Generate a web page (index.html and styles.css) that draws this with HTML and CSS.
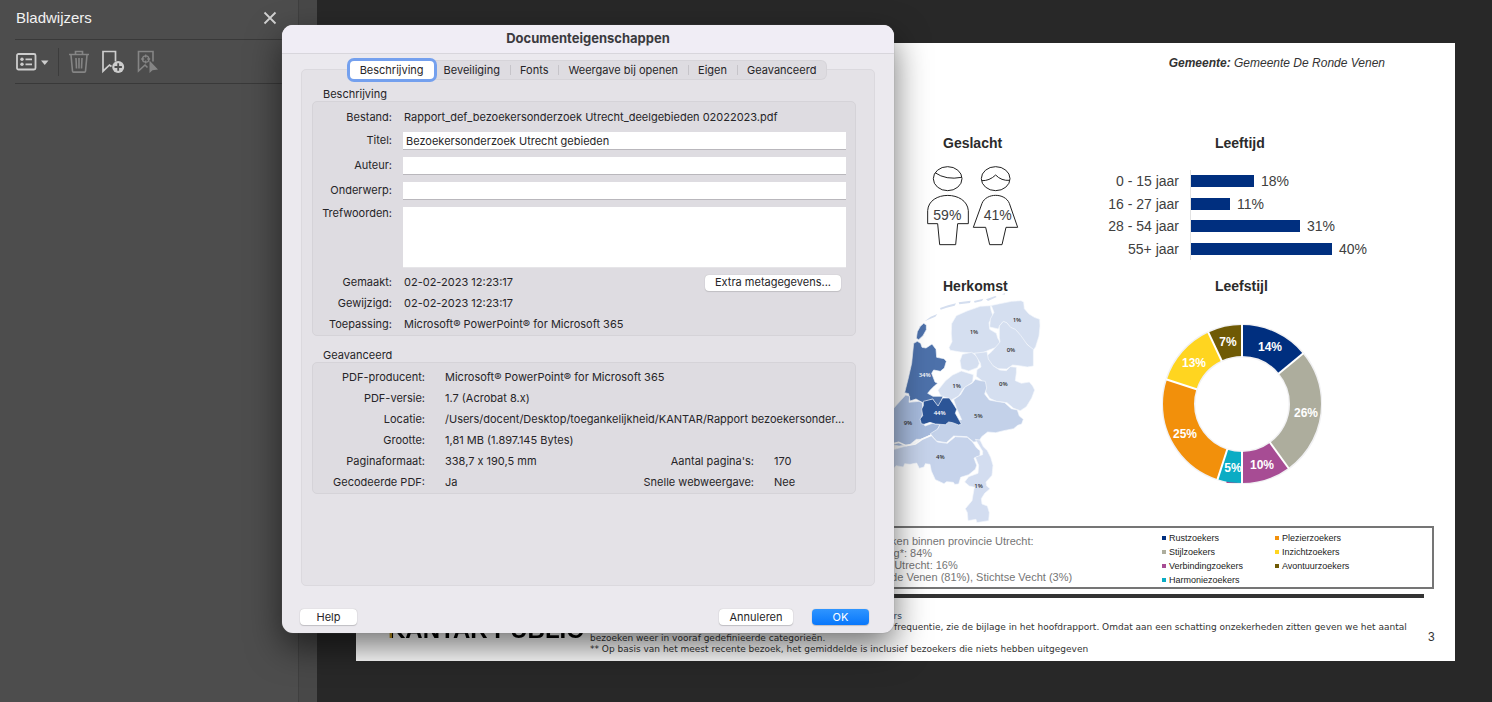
FILE: index.html
```html
<!DOCTYPE html>
<html lang="nl">
<head>
<meta charset="utf-8">
<meta name="viewport" content="width=device-width, initial-scale=1">
<title>Documenteigenschappen</title>
<link rel="stylesheet" href="styles.css">
</head>
<body>
<div class="app">
  <aside class="sidebar">
    <div class="sidebar-panel">
      <header class="sidebar-header">
        <h2 class="sidebar-title">Bladwijzers</h2>
        <button class="icon-button" type="button" aria-label="Sluiten">
          <svg width="14" height="14" viewBox="0 0 14 14"><path d="M1.500 1.500 12.500 12.500M12.500 1.500 1.500 12.500" stroke="#d2d2d2" stroke-width="1.800" fill="none"/></svg>
        </button>
      </header>
      <div class="toolbar">
        <button class="icon-button menu-button" type="button" aria-label="Opties">
          <svg width="34" height="18" viewBox="0 0 34 18"><rect x="1" y="1" width="18.500" height="15.500" rx="1.500" fill="none" stroke="#cdcdcd" stroke-width="1.800"/><circle cx="6" cy="6.300" r="1.700" fill="#cdcdcd"/><circle cx="6" cy="11.300" r="1.700" fill="#cdcdcd"/><path d="M9.500 6.300h6.500M9.500 11.300h6.500" stroke="#cdcdcd" stroke-width="1.800"/><path d="M25 7.500h7.500l-3.750 4.500z" fill="#cdcdcd"/></svg>
        </button>
        <span class="toolbar-divider"></span>
        <button class="icon-button" type="button" aria-label="Verwijderen">
          <svg width="22" height="24" viewBox="0 0 22 24"><path d="M1 4.500h20M7.500 4V1.500h7V4M3 5l1.500 16.200q.1.900 1 .900h11q.900 0 1-.900L19 5M8 8l.5 10.500M11 8v10.500M14 8l-.5 10.500" fill="none" stroke="#858585" stroke-width="1.600"/></svg>
        </button>
        <button class="icon-button" type="button" aria-label="Nieuwe bladwijzer">
          <svg width="24" height="24" viewBox="0 0 24 24"><path d="M10.500 16.500 8.500 15 2 21.200V1.500h12.500v10" fill="none" stroke="#cdcdcd" stroke-width="1.700"/><circle cx="17.200" cy="17" r="6" fill="#cdcdcd"/><path d="M17.200 13.300v7.400M13.500 17h7.400" stroke="#4d4d4d" stroke-width="1.800"/></svg>
        </button>
        <button class="icon-button goto-button" type="button" aria-label="Naar bladwijzer">
          <svg width="24" height="24" viewBox="0 0 24 24"><path d="M11.500 17.500 9 15l-6.500 6V1.500H17v10" fill="none" stroke="#858585" stroke-width="1.600"/><circle cx="9.700" cy="9" r="3.200" fill="none" stroke="#858585" stroke-width="1.300"/><path d="M9.700 4.500v3M9.700 10.500v3M5.200 9h3M11.200 9h3" stroke="#858585" stroke-width="1.300"/><path d="M13.500 10.500v12.500l3-2.800 5.500-.7z" fill="#858585"/></svg>
        </button>
      </div>
    </div>
    <div class="sidebar-edge"></div>
  </aside>

  <main class="viewer">
    <article class="slide">
      <p class="slide-place"><b>Gemeente:</b> Gemeente De Ronde Venen</p>

      <div class="charts">
        <section class="chart chart-people">
          <h2 class="chart-title">Geslacht</h2>
          <svg class="people" width="200" height="88" viewBox="0 120 600 264">
            <g fill="none" stroke="#222" stroke-width="3">
              <ellipse cx="203" cy="176" rx="43" ry="36"/><path d="M165 158Q198 181 245 172"/>
              <ellipse cx="347" cy="176" rx="43" ry="36"/><path d="M305 182Q328 183 347 165 364 183 389 181"/>
              <path d="M143 311V272C146 211 260 211 265 272V311H233L227 374H179L173 311Z"/>
              <path d="M280 322 306 250C319 218 375 218 388 250L413 322H378L366 374H329L317 322Z"/>
            </g>
            <text class="people-value" x="202" y="300">59%</text>
            <text class="people-value" x="353" y="300">41%</text>
          </svg>
        </section>

        <section class="chart chart-age">
          <h2 class="chart-title">Leeftijd</h2>
          <dl class="bars">
            <div class="bar-row"><dt>0 - 15 jaar</dt><dd><span class="bar" style="width:63px"></span>18%</dd></div>
            <div class="bar-row"><dt>16 - 27 jaar</dt><dd><span class="bar" style="width:39px"></span>11%</dd></div>
            <div class="bar-row"><dt>28 - 54 jaar</dt><dd><span class="bar" style="width:109px"></span>31%</dd></div>
            <div class="bar-row"><dt>55+ jaar</dt><dd><span class="bar" style="width:141px"></span>40%</dd></div>
          </dl>
        </section>

        <section class="chart chart-origin">
          <h2 class="chart-title">Herkomst</h2>
          <svg class="map" width="200" height="234" viewBox="0 0 600 702">
            <g stroke="#f4f7fc" stroke-width="2" stroke-linejoin="round">
              <path fill="#d4deef" stroke="none" d="M134 94l18-14 20-8-6 8-18 8zM180 54l24-8 24-6-4 7-24 6-18 6zM236 37l36-5-2 7-32 4zM282 33l28-7-4 7-22 5zM318 28l28-10 4 3-26 12zM366 13l10-4-2 5z"/>
              <path fill="#4d71aa" d="M131 100l8 5v14l-10 18-13 12-7-4 3-20 9-16z"/>
              <path fill="#d5dff0" d="M331 47l-30 2-40 14-32 14-14 24-1 30 2 24-9 18 4 8 30 5 42 4 24-1 20-9 22-8 12-14-8-14-4-14-20-12-2-20 12-20-6-18z"/>
              <path fill="#d5dff0" d="M331 47l24-5 40-8 28-2 8 4 2 20 14 16 16 10 16 6 1 20-3 30-10 32-8 12-14-16-14-12-18-28-10-8-12-5-10-14-12-4-10 12-4 10-26-6 2-24 11-20-8-20z"/>
              <path fill="#d5dff0" d="M358 108l12-14 10 4 12 14 14 6 16 18 20 28 18 14v50l-18 3-24-4-20-2-18 12-26-1-22-12-8-14-4-12 16-14 24-28-2-14z"/>
              <path fill="#d5dff0" d="M247 193l28-6 18 14 5 20-6 12-26 10-22-7-4-24z"/>
              <path fill="#d5dff0" d="M283 190l38-5 4 22 14 20 20 13 20 2 12-12 18 2v16l-3 24 18 8 24-4 10 12 6 12-9 24-16 26-18 12-20-7-20-17-32-4-20-9-12-20-2-16-8-16-18-14 2-20 12-8-2-12z"/>
              <path fill="#d5dff0" d="M174 301l22-28 22-18 26-12 36 11-2 22-28 20-14 22-22 12-32-13z"/>
              <path fill="#4d71aa" d="M112 154l10 6 4 12 12 2 18-12 12 16 2 24 22 4 7 8-6 20-12 10-20-4-6 10 10 26 8 4-10 8-12 12-8 10 16 9 30 0-8 22-9 10-14-24-30 11-20-11-18 6-4-22-12-3 11-44 10-44 6-60z"/>
              <path fill="#a7bbdd" d="M77 315l12 4-2 18 30-3 10 4 2 28-6 22 12 20 22-8 24 4-10 18-22 14-20 12-20 0-20 16-32 4-30-6V372l20-24z"/>
              <path fill="#c3d1e9" d="M286 268l16 4 14 2 4 20-6 18 14 18 20 4 26 4 20 18 18 4 6 18 12 10-5 14-12 4-12 10-30 6-24 6-24-2-18 14-8 14-16 2-20-16-40-2-22 20-30-5-18-22 22-14 16-32 30 6 26-2-16-36-8-24 20-14 14-24 22-12z"/>
              <path fill="#2c5597" d="M130 334l28-7 16 21 14-24 20 0 12 18 10 16-4 12 18 32-8 3-18-7-12-2-10 8-30-2-16-5-18 6-8-2-4-14 8-10-3-20 5-10z"/>
              <path fill="#c6d3eb" d="M26 482l18-4 40-12 18-4 20-14 30-13 20 21 30 4 24-20 36 2 16 14 12 18 10 8v16l-18 6 8 22-4 12-20 16-24 8-6 20-12 1-4-6-20-2-8 6-26-12-12-26-4-20-14-2-4 10-14 4-8-16-20 4-16-2-4 10-22-4-12 14-8-4z"/>
              <path fill="#d3ddf0" d="M286 448l14 2 10 20 12 12 10 20 7 24-3 30-18 20 2 12 10 8-16 14-10 16 2 16 16 6 6 20-2 24-30 5-6 0-2-9-24 4-2-24-6-12 20-24 6-34 2-6-16-4-14-12 12-16 28-10 2-24-10-24 10-4 12-4v-10z"/>
            </g>
            <path fill="none" stroke="#fff" stroke-width="5" d="M30 463l26-6 22 10 28-5 20-14 28-12"/>
            <g class="map-values">
              <text x="282" y="131">1%</text><text x="411" y="97">1%</text><text x="393" y="185">0%</text><text x="370" y="289">0%</text><text x="230" y="293">1%</text><text x="295" y="384">5%</text><text x="84" y="406">9%</text><text x="181" y="508">4%</text><text x="296" y="595">1%</text>
              <text class="map-value-light" x="134" y="262">34%</text><text class="map-value-light" x="179" y="375">44%</text>
            </g>
          </svg>
        </section>

        <section class="chart chart-style">
          <h2 class="chart-title">Leefstijl</h2>
          <svg class="donut" width="160" height="160" viewBox="0 0 160 160">
            <circle cx="80" cy="80" r="63.500" fill="none" stroke="#f1f1f3" stroke-width="34"/>
            <g transform="rotate(-90 80 80)" fill="none" stroke-width="31">
              <circle cx="80" cy="80" r="63.500" pathLength="100" stroke="#002f7f" stroke-dasharray="14 86"/>
              <circle cx="80" cy="80" r="63.500" pathLength="100" stroke="#adad9d" stroke-dasharray="26 74" stroke-dashoffset="-14"/>
              <circle cx="80" cy="80" r="63.500" pathLength="100" stroke="#a74c94" stroke-dasharray="10 90" stroke-dashoffset="-40"/>
              <circle cx="80" cy="80" r="63.500" pathLength="100" stroke="#0aacc4" stroke-dasharray="5 95" stroke-dashoffset="-50"/>
              <circle cx="80" cy="80" r="63.500" pathLength="100" stroke="#f2900b" stroke-dasharray="25 75" stroke-dashoffset="-55"/>
              <circle cx="80" cy="80" r="63.500" pathLength="100" stroke="#ffd520" stroke-dasharray="13 87" stroke-dashoffset="-80"/>
              <circle cx="80" cy="80" r="63.500" pathLength="100" stroke="#6f5a05" stroke-dasharray="7 93" stroke-dashoffset="-93"/>
            </g>
            <g stroke="#fff" stroke-width="2">
              <path d="M80 0v33"/><path d="M80 0v33" transform="rotate(50.400 80 80)"/><path d="M80 0v33" transform="rotate(144 80 80)"/><path d="M80 0v33" transform="rotate(180 80 80)"/><path d="M80 0v33" transform="rotate(198 80 80)"/><path d="M80 0v33" transform="rotate(288 80 80)"/><path d="M80 0v33" transform="rotate(334.800 80 80)"/>
            </g>
            <g class="donut-values">
              <text x="108" y="27">14%</text><text x="144" y="93">26%</text><text x="100" y="145">10%</text><text x="71" y="148">5%</text><text x="23" y="114">25%</text><text x="32" y="43">13%</text><text x="66" y="22">7%</text>
            </g>
          </svg>
        </section>
      </div>

      <div class="summary">
        <p class="summary-text">eken binnen provincie Utrecht:<br>ing*: 84%<br>e Utrecht: 16%<br>nde Venen (81%), Stichtse Vecht (3%)</p>
        <ul class="legend">
          <li class="key key-navy">Rustzoekers</li>
          <li class="key key-grey">Stijlzoekers</li>
          <li class="key key-purple">Verbindingzoekers</li>
          <li class="key key-cyan">Harmoniezoekers</li>
        </ul>
        <ul class="legend">
          <li class="key key-orange">Plezierzoekers</li>
          <li class="key key-yellow">Inzichtzoekers</li>
          <li class="key key-olive">Avontuurzoekers</li>
        </ul>
      </div>
      <hr class="slide-rule">

      <footer class="slide-footer">
        <div class="brand">KANTAR PUBLIC</div>
        <div class="notes">
          <p class="note-tail note-source">ers</p>
          <p class="note-tail">frequentie, zie de bijlage in het hoofdrapport. Omdat aan een schatting onzekerheden zitten geven we het aantal</p>
          <p>bezoeken weer in vooraf gedefinieerde categorieën.</p>
          <p>** Op basis van het meest recente bezoek, het gemiddelde is inclusief bezoekers die niets hebben uitgegeven</p>
        </div>
        <span class="page-number">3</span>
      </footer>
    </article>
  </main>

  <section class="dialog" role="dialog" aria-labelledby="dialog-title">
    <h1 class="dialog-title" id="dialog-title">Documenteigenschappen</h1>
    <div class="dialog-body">
      <div class="tabs" role="tablist">
        <button class="tab tab-active" type="button" role="tab" aria-selected="true">Beschrijving</button>
        <button class="tab" type="button" role="tab">Beveiliging</button>
        <button class="tab" type="button" role="tab">Fonts</button>
        <button class="tab" type="button" role="tab">Weergave bij openen</button>
        <button class="tab" type="button" role="tab">Eigen</button>
        <button class="tab" type="button" role="tab">Geavanceerd</button>
      </div>
      <div class="tab-panel" role="tabpanel">
        <h2 class="group-title">Beschrijving</h2>
        <div class="group">
          <div class="fields">
            <span class="label">Bestand:</span><span class="value">Rapport_def_bezoekersonderzoek Utrecht_deelgebieden 02022023.pdf</span>
            <label class="label" for="titel">Titel:</label><input class="field" id="titel" type="text" value="Bezoekersonderzoek Utrecht gebieden">
            <label class="label" for="auteur">Auteur:</label><input class="field" id="auteur" type="text">
            <label class="label" for="onderwerp">Onderwerp:</label><input class="field" id="onderwerp" type="text">
            <label class="label label-area" for="trefwoorden">Trefwoorden:</label><textarea class="field field-area" id="trefwoorden"></textarea>
          </div>
          <div class="facts">
            <span class="label">Gemaakt:</span>
            <div class="value value-with-action"><span>02-02-2023 12:23:17</span><button class="button" type="button">Extra metagegevens...</button></div>
            <span class="label">Gewijzigd:</span><span class="value">02-02-2023 12:23:17</span>
            <span class="label">Toepassing:</span><span class="value">Microsoft® PowerPoint® for Microsoft 365</span>
          </div>
        </div>
        <h2 class="group-title group-title-next">Geavanceerd</h2>
        <div class="group group-advanced">
          <span class="label">PDF-producent:</span><span class="wide">Microsoft® PowerPoint® for Microsoft 365</span>
          <span class="label">PDF-versie:</span><span class="wide">1.7 (Acrobat 8.x)</span>
          <span class="label">Locatie:</span><span class="wide">/Users/docent/Desktop/toegankelijkheid/KANTAR/Rapport bezoekersonder...</span>
          <span class="label">Grootte:</span><span class="wide">1,81 MB (1.897.145 Bytes)</span>
          <span class="label">Paginaformaat:</span><span class="plain">338,7 x 190,5 mm</span><span class="label">Aantal pagina's:</span><span>170</span>
          <span class="label">Gecodeerde PDF:</span><span>Ja</span><span class="label">Snelle webweergave:</span><span>Nee</span>
        </div>
      </div>
      <div class="dialog-actions">
        <button class="button button-help" type="button">Help</button>
        <button class="button button-cancel" type="button">Annuleren</button>
        <button class="button button-primary" type="button">OK</button>
      </div>
    </div>
  </section>
</div>
</body>
</html>
```

FILE: styles.css
```css
* { box-sizing: border-box; }
body { margin: 0; background: #282828; font-family: "Liberation Sans", Arial, sans-serif; color: #333; }
h1, h2, p, ul, dl, dd { margin: 0; padding: 0; }
button, input, textarea { font: inherit; color: inherit; }
svg { display: block; }

.app { position: relative; display: flex; min-height: 100vh; overflow: hidden; }

/* Bookmarks sidebar */
.sidebar { display: flex; flex: 0 0 317px; background: #4d4d4d; }
.sidebar-panel { flex: 1; padding-left: 15px; }
.sidebar-edge { flex: 0 0 19px; border-left: 1px solid #3f3f3f; background: #484848; }
.sidebar-header { display: flex; align-items: center; justify-content: space-between; height: 40px; padding: 0 21px 3px 1px; border-bottom: 1px solid #393939; }
.sidebar-title { color: #f2f2f2; font-size: 15px; font-weight: 400; line-height: 18px; }
.icon-button { display: block; padding: 0; border: 0; background: none; }
.toolbar { display: flex; align-items: center; height: 44px; border-bottom: 1px solid #393939; }
.menu-button { width: 43px; padding-left: 1px; }
.toolbar-divider { width: 1px; height: 28px; margin-right: 9px; background: #3c3c3c; }
.toolbar .icon-button + .icon-button { margin-left: 11px; }

/* Document page */
.viewer { flex: 1; min-width: 0; padding: 43px 37px 41px 39px; }
.slide { display: flex; flex-direction: column; padding: 12px 0 6px; background: #fff; }
.slide-place { padding-right: 70px; font-size: 12px; font-style: italic; line-height: 16px; text-align: right; }
.charts { display: grid; grid-template-columns: 200px 365px; column-gap: 10px; justify-content: end; margin-top: 64px; }
.chart { min-width: 0; }
.chart-title { color: #2b2b2b; font-size: 14px; line-height: 16px; }
.chart-people, .chart-age { height: 143px; }
.chart-people .chart-title, .chart-origin .chart-title { padding-left: 63px; }
.chart-age .chart-title, .chart-style .chart-title { padding-left: 125px; }
.people { margin-top: 9px; }
.people-value { fill: #404040; font-size: 42px; text-anchor: middle; }
.bars { display: grid; grid-template-rows: repeat(4, 1fr); height: 90px; margin-top: 19px; }
.bar-row { display: grid; grid-template-columns: 89px 1fr; column-gap: 11px; font-size: 14px; color: #404040; }
.bar-row dt { align-self: center; text-align: right; }
.bar-row dd { display: flex; align-items: center; gap: 7px; border-left: 1px solid #e2e2e2; }
.bar { height: 12px; background: #002f7f; }
.map { margin-top: -4px; }
.map-values { fill: #333; font-family: "Open Sans", sans-serif; font-size: 18px; font-weight: 600; text-anchor: middle; }
.map-value-light { fill: #fff; }
.donut { margin: 30px 0 0 72px; }
.donut-values { fill: #fff; font-size: 12px; font-weight: 700; text-anchor: middle; }

.summary { display: grid; grid-template-columns: 1fr 113px 157px; margin: 2px 21px 0 234px; padding: 2px 0 0; border: 2px solid #757575; }
.summary-text { padding: 5px 0 0 293px; color: #757575; font-size: 11px; line-height: 12px; white-space: nowrap; }
.legend { padding-top: 1px; list-style: none; }
.key { display: flex; align-items: center; gap: 3px; color: #222; font-size: 9px; line-height: 14px; }
.key::before { content: ""; width: 4px; height: 4px; background: currentColor; }
.key-navy::before { background: #002f7f; }
.key-grey::before { background: #adad9d; }
.key-purple::before { background: #a74c94; }
.key-cyan::before { background: #0aacc4; }
.key-orange::before { background: #f2900b; }
.key-yellow::before { background: #ffd520; }
.key-olive::before { background: #6f5a05; }
.slide-rule { width: auto; height: 4px; margin: 5px 31px 0 234px; border: 0; background: #333; }

.slide-footer { display: grid; grid-template-columns: 202px 1fr 30px; align-items: end; padding: 13px 0 0 32px; }
.brand { padding-bottom: 11px; background: linear-gradient(90deg, #c79a1c 4px, #000 4px); -webkit-background-clip: text; background-clip: text; color: transparent; font-size: 24px; font-weight: 700; line-height: 28px; white-space: nowrap; }
.notes { font-family: "DejaVu Sans", Verdana, sans-serif; font-size: 9px; line-height: 11px; white-space: nowrap; }
.note-tail { padding-left: 304px; }
.note-source { padding-left: 298px; color: #2d4a6b; }
.page-number { padding-bottom: 10px; padding-left: 3px; font-size: 12px; line-height: 16px; }

/* Properties dialog */
.dialog { position: absolute; top: 25px; left: 282px; width: 612px; overflow: visible; border-radius: 11px; background: #ebe9ee; box-shadow: 0 0 1px #777, 0 14px 34px rgba(0, 0, 0, .55); color: #262528; font-family: Inter, "Liberation Sans", sans-serif; font-size: 11px; line-height: 14px; }
.dialog-title { height: 29px; border-bottom: 1px solid #d8d6dc; border-radius: 11px 11px 0 0; background: #f0edf5; color: #3b3a3e; font-size: 13px; line-height: 27px; text-align: center; }
.dialog-body { padding: 7px 19px 8px; }
.tabs { position: relative; display: flex; width: max-content; height: 18px; margin: 0 auto -10px; border-radius: 5px; background: #dedce1; box-shadow: 0 0 0 1px #d6d4d9; }
.tab { position: relative; padding: 0 10px; border: 0; background: none; line-height: 18px; }
.tab + .tab + .tab::before { content: ""; position: absolute; top: 4px; left: 0; width: 1px; height: 10px; background: #c6c4c9; }
.tab-active { border-radius: 4px; background: #fff; box-shadow: 0 0 0 3px #74a0ee; }
.tab-panel { min-height: 517px; padding: 17px 18px 0 10px; border: 1px solid #dbd9de; border-radius: 5px; background: #e4e2e7; }
.group-title { padding-left: 11px; font-size: 11px; font-weight: 400; line-height: 14px; }
.group-title-next { margin-top: 12px; }
.group { border: 1px solid #d5d3d8; border-radius: 5px; background: #dedce1; }
.fields { display: grid; grid-template-columns: 79px 1fr; gap: 7px 11px; padding: 7px 9px 4px 0; line-height: 16px; }
.label { text-align: right; white-space: nowrap; }
.label-area { line-height: 13px; }
.value { padding-left: 1px; white-space: nowrap; }
.field { display: block; width: 100%; min-width: 0; height: 18px; padding: 1px 3px 0; border: 0; border-bottom: 1px solid #b9b7bc; border-radius: 0; background: #fff; line-height: 16px; }
.field-area { height: 61px; border-color: #e6e5e8; resize: none; }
.facts { display: grid; grid-template-columns: 79px 1fr; column-gap: 11px; padding-right: 14px; line-height: 21px; }
.value-with-action { display: flex; align-items: center; justify-content: space-between; }
.group-advanced { display: grid; grid-template-columns: 112px 1fr 112px 70px; column-gap: 20px; padding: 4px 11px 0 0; line-height: 21px; }
.wide { grid-column: span 3; white-space: nowrap; }
.plain { font-feature-settings: "calt" 0; }
.button { height: 16px; padding: 0 10px; border: 0; border-radius: 4px; background: #fff; box-shadow: 0 0 1px #aaa, 0 1px 1px #c3c1c6; line-height: 15px; }
.dialog-actions { display: flex; align-items: center; margin: 23px 6px 0 -1px; }
.button-help { width: 57px; margin-right: auto; }
.button-cancel { width: 74px; margin-right: 19px; }
.button-primary { width: 57px; background: linear-gradient(#2f95ff, #0877fb); color: #fff; }
```
